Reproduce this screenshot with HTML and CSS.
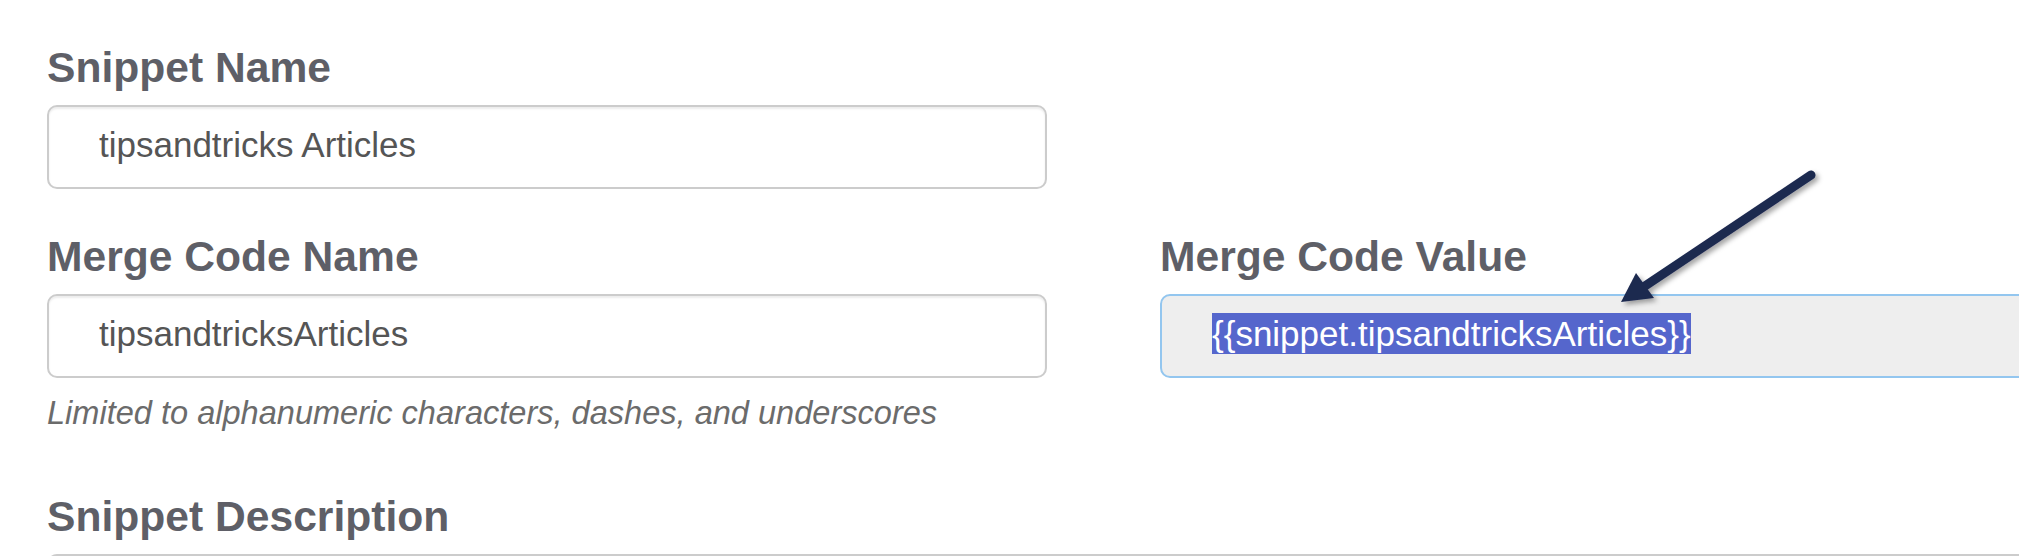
FILE: index.html
```html
<!DOCTYPE html>
<html lang="en">
<head>
<meta charset="utf-8">
<title>Snippet</title>
<link rel="stylesheet" href="styles.css">
</head>
<body>
<div class="page">
<div class="form">
  <div class="row">
    <div class="group">
      <label class="label">Snippet Name</label>
      <div class="input">tipsandtricks Articles</div>
    </div>
  </div>
  <div class="row">
    <div class="group">
      <label class="label">Merge Code Name</label>
      <div class="input">tipsandtricksArticles</div>
      <p class="help">Limited to alphanumeric characters, dashes, and underscores</p>
    </div>
    <div class="group">
      <label class="label">Merge Code Value</label>
      <div class="input readonly"><span class="selected">{{snippet.tipsandtricksArticles}}</span></div>
    </div>
  </div>
  <div class="group wide">
    <label class="label">Snippet Description</label>
    <div class="textarea"></div>
  </div>
</div>
<svg class="arrow" width="240" height="160" viewBox="0 0 240 160" aria-hidden="true">
  <defs>
    <filter id="sh" x="-20%" y="-20%" width="140%" height="140%">
      <feDropShadow dx="3" dy="3" stdDeviation="2.5" flood-color="#000" flood-opacity="0.35"/>
    </filter>
  </defs>
  <g filter="url(#sh)">
    <line x1="211" y1="15" x2="42" y2="128" stroke="#1d2950" stroke-width="9" stroke-linecap="round"/>
    <polygon points="21,142 36,113 54,138" fill="#1d2950"/>
  </g>
</svg>
</div>
</body>
</html>
```

FILE: styles.css
```css
html, body {
  margin: 0;
  padding: 0;
  background: #fff;
}

body {
  font-family: "Liberation Sans", Arial, sans-serif;
}

.page {
  position: relative;
  width: 2019px;
  height: 556px;
  overflow: hidden;
}

.form {
  width: 2113px;
  padding: 42px 0 0 47px;
}

.row {
  display: grid;
  grid-template-columns: 1000px 1000px;
  column-gap: 113px;
  align-items: start;
}

.group {
  display: flex;
  flex-direction: column;
  margin-bottom: 42px;
}

.label {
  font-size: 42.6px;
  font-weight: bold;
  line-height: 50px;
  color: #5e5f67;
  margin-bottom: 13px;
}

.input {
  box-sizing: border-box;
  height: 84px;
  border: 2px solid #cccccc;
  border-radius: 10px;
  box-shadow: inset 0 2px 2px rgba(0, 0, 0, 0.075);
  padding: 0 50px 5px 50px;
  display: flex;
  align-items: center;
  font-size: 35px;
  color: #555555;
  white-space: nowrap;
  background: #fff;
}

.input.readonly {
  background: #eeeeee;
  border-color: #93c6ef;
  box-shadow: none;
}

.selected {
  display: inline-block;
  line-height: 41px;
  background: #5566cc;
  color: #ffffff;
}

.help {
  margin: 15px 0 16px 0;
  font-size: 32.55px;
  line-height: 40px;
  font-style: italic;
  color: #6b6b6b;
}

.wide {
  width: 2113px;
}

.textarea {
  box-sizing: border-box;
  height: 120px;
  border: 2px solid #cccccc;
  border-radius: 10px;
  box-shadow: inset 0 2px 2px rgba(0, 0, 0, 0.075);
  background: #fff;
}

.arrow {
  position: absolute;
  left: 1600px;
  top: 160px;
  overflow: visible;
}
```
